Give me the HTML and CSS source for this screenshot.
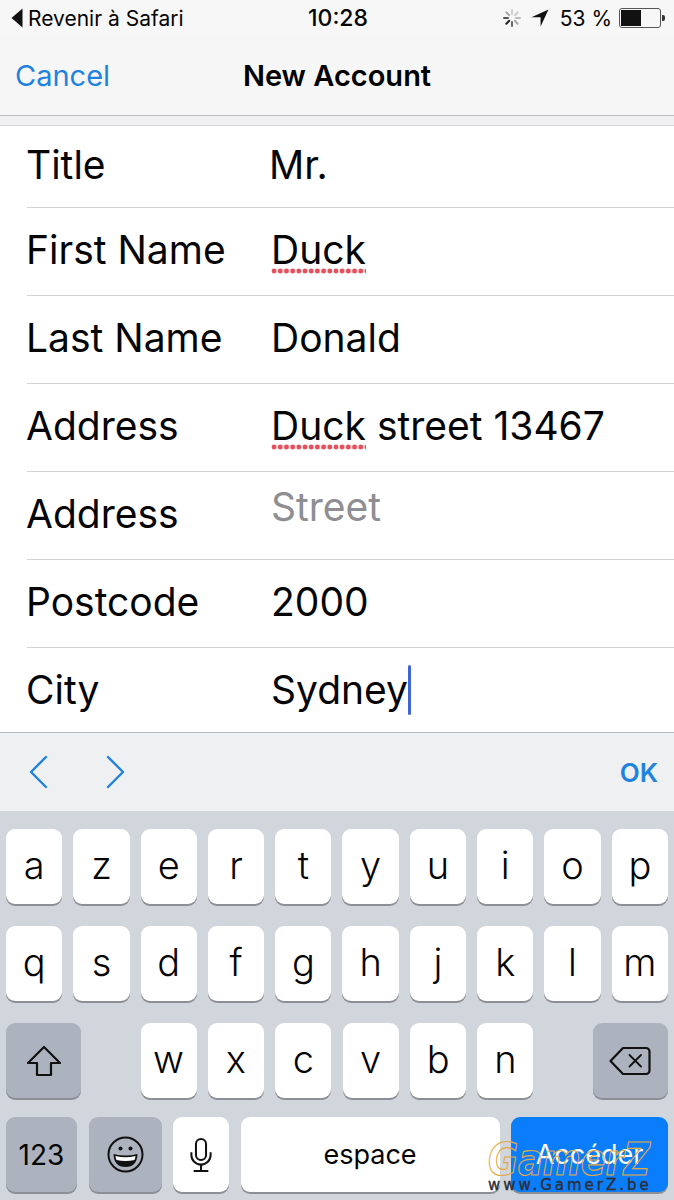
FILE: index.html
```html
<!DOCTYPE html>
<html lang="en">
<head>
    <meta charset="UTF-8">
    <meta name="viewport" content="width=device-width, initial-scale=1.0">
    <title>New Account</title>
    <link rel="stylesheet" href="styles.css">
</head>
<body>
    <div class="phone">
        <!-- Status bar -->
        <div class="status-bar">
            <div class="status-left">
                <svg class="back-arrow" width="12" height="20" viewBox="0 0 12 20"><path d="M11.5 0.5V19.5L0.5 10Z" fill="#111"/></svg>
                <span>Revenir à Safari</span>
            </div>
            <div class="status-time">10:28</div>
            <div class="status-right">
                <svg class="spinner" width="18" height="18" viewBox="0 0 18 18" stroke-width="2" stroke-linecap="round">
                    <path d="M9 1V5" stroke="#ccc"/>
                    <path d="M14.7 3.3L11.8 6.2" stroke="#ccc"/>
                    <path d="M17 9H13" stroke="#bbb"/>
                    <path d="M14.7 14.7L11.8 11.8" stroke="#aaa"/>
                    <path d="M9 17V13" stroke="#666"/>
                    <path d="M3.3 14.7L6.2 11.8" stroke="#222"/>
                    <path d="M1 9H5" stroke="#555"/>
                    <path d="M3.3 3.3L6.2 6.2" stroke="#aaa"/>
                </svg>
                <svg class="location" width="18" height="18" viewBox="0 0 18 18"><path d="M17.5 0.5L0.5 8.2H9.6V17.5Z" fill="#111"/></svg>
                <span class="battery-text">53 %</span>
                <div class="battery"><div class="battery-fill"></div></div>
                <div class="battery-nub"></div>
            </div>
        </div>

        <!-- Nav bar -->
        <div class="nav-bar">
            <div class="nav-cancel">Cancel</div>
            <div class="nav-title">New Account</div>
            <div></div>
        </div>
        <div class="nav-gap"></div>

        <!-- Form -->
        <div class="form">
            <div class="row row-title">
                <div class="label">Title</div>
                <div class="value value-mr">Mr.</div>
            </div>
            <div class="row">
                <div class="label">First Name</div>
                <div class="value"><span class="misspelled">Duck</span></div>
            </div>
            <div class="row">
                <div class="label">Last Name</div>
                <div class="value">Donald</div>
            </div>
            <div class="row">
                <div class="label">Address</div>
                <div class="value"><span class="misspelled">Duck</span> street 13467</div>
            </div>
            <div class="row">
                <div class="label">Address</div>
                <div class="value placeholder">Street</div>
            </div>
            <div class="row">
                <div class="label">Postcode</div>
                <div class="value">2000</div>
            </div>
            <div class="row row-last">
                <div class="label">City</div>
                <div class="value">Sydney<span class="caret"></span></div>
            </div>
        </div>

        <!-- Keyboard toolbar -->
        <div class="toolbar">
            <div class="toolbar-arrows">
                <svg width="20" height="34" viewBox="0 0 20 34" fill="none" stroke="#1f82df" stroke-width="2.4" stroke-linecap="round" stroke-linejoin="round"><path d="M18 2L3 17L18 32"/></svg>
                <svg width="20" height="34" viewBox="0 0 20 34" fill="none" stroke="#1f82df" stroke-width="2.4" stroke-linecap="round" stroke-linejoin="round"><path d="M2 2L17 17L2 32"/></svg>
            </div>
            <div class="toolbar-ok">OK</div>
        </div>

        <!-- Keyboard -->
        <div class="keyboard">
            <div class="key-row">
                <div class="key">a</div><div class="key">z</div><div class="key">e</div><div class="key">r</div><div class="key">t</div>
                <div class="key">y</div><div class="key">u</div><div class="key">i</div><div class="key">o</div><div class="key">p</div>
            </div>
            <div class="key-row">
                <div class="key">q</div><div class="key">s</div><div class="key">d</div><div class="key">f</div><div class="key">g</div>
                <div class="key">h</div><div class="key">j</div><div class="key">k</div><div class="key">l</div><div class="key">m</div>
            </div>
            <div class="key-row key-row-mid">
                <div class="key key-dark key-side">
                    <svg width="36" height="32" viewBox="0 0 36 32" fill="none" stroke="#111" stroke-width="2.2" stroke-linejoin="round"><path d="M18 2L34 18H25V30H11V18H2Z"/></svg>
                </div>
                <div class="key-group">
                    <div class="key">w</div><div class="key">x</div><div class="key">c</div><div class="key">v</div><div class="key">b</div><div class="key">n</div>
                </div>
                <div class="key key-dark key-side">
                    <svg width="42" height="30" viewBox="0 0 42 30" fill="none" stroke="#111" stroke-width="2.2" stroke-linejoin="round" stroke-linecap="round"><path d="M14 2H37A3.5 3.5 0 0 1 40.500 5.500V24.500A3.500 3.500 0 0 1 37 28H14L1.500 15Z"/><path d="M20.500 9L32 20.500M32 9L20.500 20.500" stroke-width="1.800"/></svg>
                </div>
            </div>
            <div class="key-row key-row-bottom">
                <div class="key key-dark key-123">123</div>
                <div class="key key-dark key-emoji">
                    <svg width="37" height="37" viewBox="0 0 37 37"><circle cx="18.500" cy="18.500" r="17" fill="none" stroke="#111" stroke-width="2"/><circle cx="13.500" cy="12.500" r="2" fill="#111"/><circle cx="23.500" cy="12.500" r="2" fill="#111"/><path d="M6.500 18Q18.500 21 30.500 18Q30 31 18.500 31Q7 31 6.500 18Z" fill="#111"/><path d="M8.500 20Q18.500 22.500 28.500 20Q28.300 22.500 27.500 24Q18.500 26 9.500 24Q8.700 22.500 8.500 20Z" fill="#fff"/></svg>
                </div>
                <div class="key key-mic">
                    <svg width="22" height="36" viewBox="0 0 24 38" fill="none" stroke="#111" stroke-width="2.2"><rect x="6.500" y="1.500" width="11" height="23" rx="5.500"/><path d="M1.500 16V19A10.500 10.500 0 0 0 22.500 19V16"/><path d="M12 29.500V36M4 36.500H20"/></svg>
                </div>
                <div class="key key-space">espace</div>
                <div class="key key-go">Accéder</div>
            </div>
        </div>

        <!-- Watermark over the keyboard -->
        <div class="watermark">
            <div class="watermark-name">GamerZ</div>
            <div class="watermark-url">www.GamerZ.be</div>
        </div>
    </div>
</body>
</html>
```

FILE: styles.css
```css
body {
    margin: 0;
    background: #fff;
    font-family: Inter, "Liberation Sans", Arial, sans-serif;
    color: #050505;
}

.phone {
    position: relative;
    width: 674px;
    height: 1200px;
    overflow: hidden;
}

/* status bar */
.status-bar {
    display: grid;
    grid-template-columns: 1fr auto 1fr;
    align-items: center;
    height: 36px;
    padding: 0 9px 0 11px;
    background: #f7f7f8;
    font-size: 21px;
}

.status-left {
    display: flex;
    align-items: center;
    gap: 5px;
}

.status-time {
    font-size: 23px;
    font-weight: 500;
}

.status-right {
    display: flex;
    align-items: center;
    justify-content: flex-end;
}

.spinner {
    margin-right: 10px;
}

.location {
    margin-right: 11px;
}

.battery-text {
    font-size: 21px;
    margin-right: 7px;
}

.battery {
    width: 38px;
    height: 16px;
    padding: 1px;
    border: 1px solid #555;
    border-radius: 3px;
}

.battery-fill {
    width: 20px;
    height: 16px;
    background: #111;
}

.battery-nub {
    width: 3px;
    height: 6px;
    margin-left: 1px;
    background: #333;
    border-radius: 0 2px 2px 0;
}

/* nav bar */
.nav-bar {
    display: grid;
    grid-template-columns: 1fr auto 1fr;
    align-items: center;
    height: 79px;
    padding: 0 15px;
    background: #f6f6f7;
    border-bottom: 1px solid #bcbcc0;
    font-size: 29px;
}

.nav-cancel {
    color: #1f82df;
}

.nav-title {
    font-size: 29px;
    font-weight: 600;
    color: #000;
}

.nav-gap {
    height: 9px;
    background: #f0f0f3;
    border-bottom: 1px solid #d4d4d8;
}

/* form */
.form {
    background: #fff;
}

.row {
    display: flex;
    align-items: center;
    height: 87px;
    margin-left: 27px;
    border-bottom: 1px solid #d2d2d5;
    font-size: 39px;
}

.row-title {
    height: 81px;
}

.row-last {
    height: 84px;
    border-bottom: none;
}

.label {
    width: 245px;
    margin: 0 0 4px -1px;
}

.value {
    position: relative;
    margin-bottom: 4px;
    white-space: nowrap;
}

.row-last .label,
.row-last .value {
    margin-bottom: 2px;
}

.value-mr {
    margin-left: -2px;
}

.placeholder {
    margin-bottom: 18px;
    color: #8e8e93;
}

.misspelled {
    padding-bottom: 1px;
    background: radial-gradient(circle, #e4505c 2.2px, transparent 2.8px) left bottom / 6.200px 6px repeat-x;
}

.caret {
    position: absolute;
    top: -1px;
    right: -3px;
    width: 3px;
    height: 50px;
    border-radius: 2px;
    background: #3f66d4;
}

/* toolbar above keyboard */
.toolbar {
    display: flex;
    align-items: center;
    justify-content: space-between;
    height: 78px;
    padding: 0 16px 0 28px;
    background: #eff0f2;
    border-top: 1px solid #b8b9bc;
}

.toolbar-arrows {
    display: flex;
    gap: 58px;
}

.toolbar-ok {
    color: #1f82df;
    font-size: 26px;
    font-weight: 600;
}

/* keyboard */
.keyboard {
    display: flex;
    flex-direction: column;
    gap: 22px;
    height: 389px;
    box-sizing: border-box;
    padding: 18px 6px 0;
    background: #d1d5dc;
}

.key-row {
    display: flex;
    gap: 11px;
}

.key-row-mid {
    justify-content: space-between;
}

.key-row-bottom {
    gap: 11.500px;
    margin-top: -3px;
}

.key-group {
    display: flex;
    gap: 11.400px;
}

.key {
    display: flex;
    align-items: center;
    justify-content: center;
    flex: 1;
    box-sizing: border-box;
    height: 75px;
    padding-bottom: 4px;
    background: #fff;
    border-radius: 9px;
    box-shadow: 0 2px 0 #8c9096;
    font-size: 38px;
    font-weight: 350;
}

.key-group .key {
    flex: none;
    width: 56px;
}

.key-dark {
    background: #adb3be;
}

.key-side {
    flex: none;
    width: 75px;
    padding-bottom: 0;
}

.key-row-bottom .key {
    flex: none;
    padding-bottom: 0;
    font-size: 27px;
    font-weight: 400;
}

.key-row-bottom .key-123 {
    width: 71px;
    font-size: 28px;
}

.key-emoji {
    width: 73px;
}

.key-mic {
    width: 56px;
}

.key-space {
    width: 259px;
}

.key-row-bottom .key-go {
    width: 157px;
    background: #0a7dfa;
    color: #fff;
}

/* watermark */
.watermark {
    position: absolute;
    left: 488px;
    top: 1142px;
    width: 170px;
}

.watermark-name {
    font-family: "DejaVu Sans", sans-serif;
    font-size: 44px;
    font-style: italic;
    font-weight: bold;
    line-height: 36px;
    color: transparent;
    -webkit-text-stroke: 1.2px #e3a843;
    transform: scaleX(0.83);
    transform-origin: left;
}

.watermark-url {
    font-family: "DejaVu Sans", sans-serif;
    font-size: 15px;
    line-height: 14px;
    color: #2b2f36;
    letter-spacing: 3px;
    white-space: nowrap;
    -webkit-text-stroke: 0.4px #2b2f36;
}
```
